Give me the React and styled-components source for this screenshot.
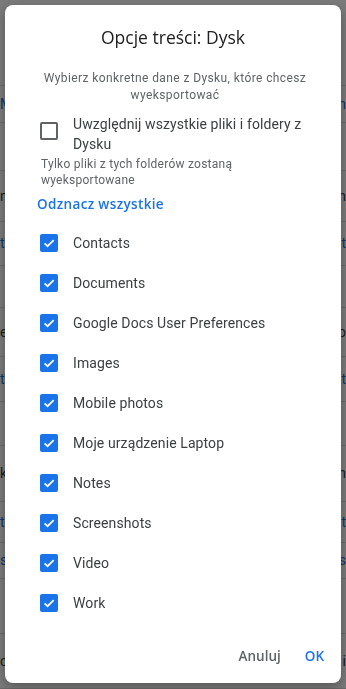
import React from "react";
import styled, { createGlobalStyle } from "styled-components";

const Global = createGlobalStyle`
  html, body { margin: 0; padding: 0; }
  body {
    width: 346px; height: 689px; overflow: hidden;
    font-family: Roboto, "Noto Sans", Arial, sans-serif;
    background: #fff;
  }
`;

const Page = styled.div`
  width: 346px;
  height: 689px;
  display: flex;
  flex-direction: column;
  padding-top: 60px;
  box-sizing: border-box;
`;

const BgRow = styled.div`
  height: ${(p) => p.h}px;
  border-bottom: 1px solid #ddd;
  display: flex;
  align-items: center;
  justify-content: space-between;
  font-size: 14px;
  color: ${(p) => (p.link ? "#1a73e8" : "#3c4043")};
`;

const Overlay = styled.div`
  position: fixed;
  inset: 0;
  background: rgba(0, 0, 0, 0.52);
  display: flex;
  padding: 5px 5px 6px 5px;
  box-sizing: border-box;
`;

const Dialog = styled.div`
  flex: 1;
  background: #fff;
  border-radius: 8px;
  display: flex;
  flex-direction: column;
  padding: 20px 0 0 32px;
  box-shadow: 0 4px 12px rgba(0, 0, 0, 0.3);
  box-sizing: border-box;
`;

const Title = styled.h2`
  margin: 0 32px 0 0;
  font-family: "Open Sans", Roboto, sans-serif;
  font-weight: 400;
  font-size: 17.5px;
  line-height: 24px;
  color: #202124;
  text-align: center;
`;

const Subtitle = styled.p`
  margin: 21px 28px 0 0;
  font-size: 12px;
  line-height: 17px;
  letter-spacing: 0.4px;
  color: #5f6368;
  text-align: center;
`;

const CheckRow = styled.label`
  display: flex;
  align-items: ${(p) => (p.top ? "flex-start" : "center")};
  gap: 15px;
  padding-left: 3px;
  min-height: 40px;
  font-size: 14px;
  line-height: 18px;
  letter-spacing: 0.1px;
  color: #3c4043;
`;

const Box = styled.span`
  flex: none;
  width: 18px;
  height: 18px;
  box-sizing: border-box;
  border-radius: 2px;
  border: ${(p) => (p.checked ? "none" : "2px solid #5f6368")};
  background: ${(p) => (p.checked ? "#1a73e8" : "transparent")};
  display: flex;
  align-items: center;
  justify-content: center;
  margin-top: ${(p) => (p.top ? "8px" : "0")};
`;

const AllRow = styled(CheckRow)`
  margin-top: 10px;
  min-height: 0;
  line-height: 20px;
  padding-right: 28px;
`;

const Hint = styled.p`
  margin: 2px 40px 0 4px;
  font-size: 12px;
  line-height: 16px;
  letter-spacing: 0.25px;
  color: #5f6368;
`;

const LinkBtn = styled.button`
  align-self: flex-start;
  margin: 6px 0 0 0;
  padding: 0;
  border: none;
  background: none;
  font-family: "Open Sans", Roboto, sans-serif;
  font-weight: 600;
  font-size: 13.5px;
  letter-spacing: 0.35px;
  line-height: 20px;
  color: #1a73e8;
`;

const List = styled.div`
  display: flex;
  flex-direction: column;
  margin-top: 9px;
`;

const Actions = styled.div`
  margin-top: auto;
  display: flex;
  justify-content: flex-end;
  gap: 8px;
  padding: 0 9px 9px 0;
`;

const ActionBtn = styled.button`
  border: none;
  background: none;
  padding: 8px 8px;
  font-family: "Open Sans", Roboto, sans-serif;
  font-weight: 600;
  font-size: 13.5px;
  line-height: 20px;
  color: ${(p) => (p.primary ? "#1a73e8" : "#5f6368")};
`;

const Check = () => (
  <svg width="14" height="14" viewBox="0 0 24 24">
    <path d="M4.5 12.5l5 5L20 7" fill="none" stroke="#fff" strokeWidth="3" />
  </svg>
);

const items = [
  "Contacts",
  "Documents",
  "Google Docs User Preferences",
  "Images",
  "Mobile photos",
  "Moje urządzenie Laptop",
  "Notes",
  "Screenshots",
  "Video",
  "Work",
];

const bg = [
  { h: 28 }, { h: 40, link: true, t: "Mn" }, { h: 52 }, { h: 56, t: "nn" },
  { h: 48, link: true, t: "tt" }, { h: 46 }, { h: 54, t: "eo" }, { h: 48, link: true, t: "tt" },
  { h: 48 }, { h: 62, t: "kn" }, { h: 44, link: true, t: "tt" }, { h: 40, link: true, t: "ss" },
  { h: 60 }, { h: 60, t: "ci" },
];

export default function App() {
  return (
    <>
      <Global />
      <Page>
        {bg.map((r, i) => (
          <BgRow key={i} h={r.h} link={r.link}>
            <span>{r.t ? r.t[0] : ""}</span>
            <span>{r.t ? r.t[1] : ""}</span>
          </BgRow>
        ))}
      </Page>
      <Overlay>
        <Dialog>
          <Title>Opcje treści: Dysk</Title>
          <Subtitle>Wybierz konkretne dane z Dysku, które chcesz wyeksportować</Subtitle>
          <AllRow top>
            <Box top />
            <span>Uwzględnij wszystkie pliki i foldery z Dysku</span>
          </AllRow>
          <Hint>Tylko pliki z tych folderów zostaną wyeksportowane</Hint>
          <LinkBtn>Odznacz wszystkie</LinkBtn>
          <List>
            {items.map((it) => (
              <CheckRow key={it}>
                <Box checked>
                  <Check />
                </Box>
                <span>{it}</span>
              </CheckRow>
            ))}
          </List>
          <Actions>
            <ActionBtn>Anuluj</ActionBtn>
            <ActionBtn primary>OK</ActionBtn>
          </Actions>
        </Dialog>
      </Overlay>
    </>
  );
}
